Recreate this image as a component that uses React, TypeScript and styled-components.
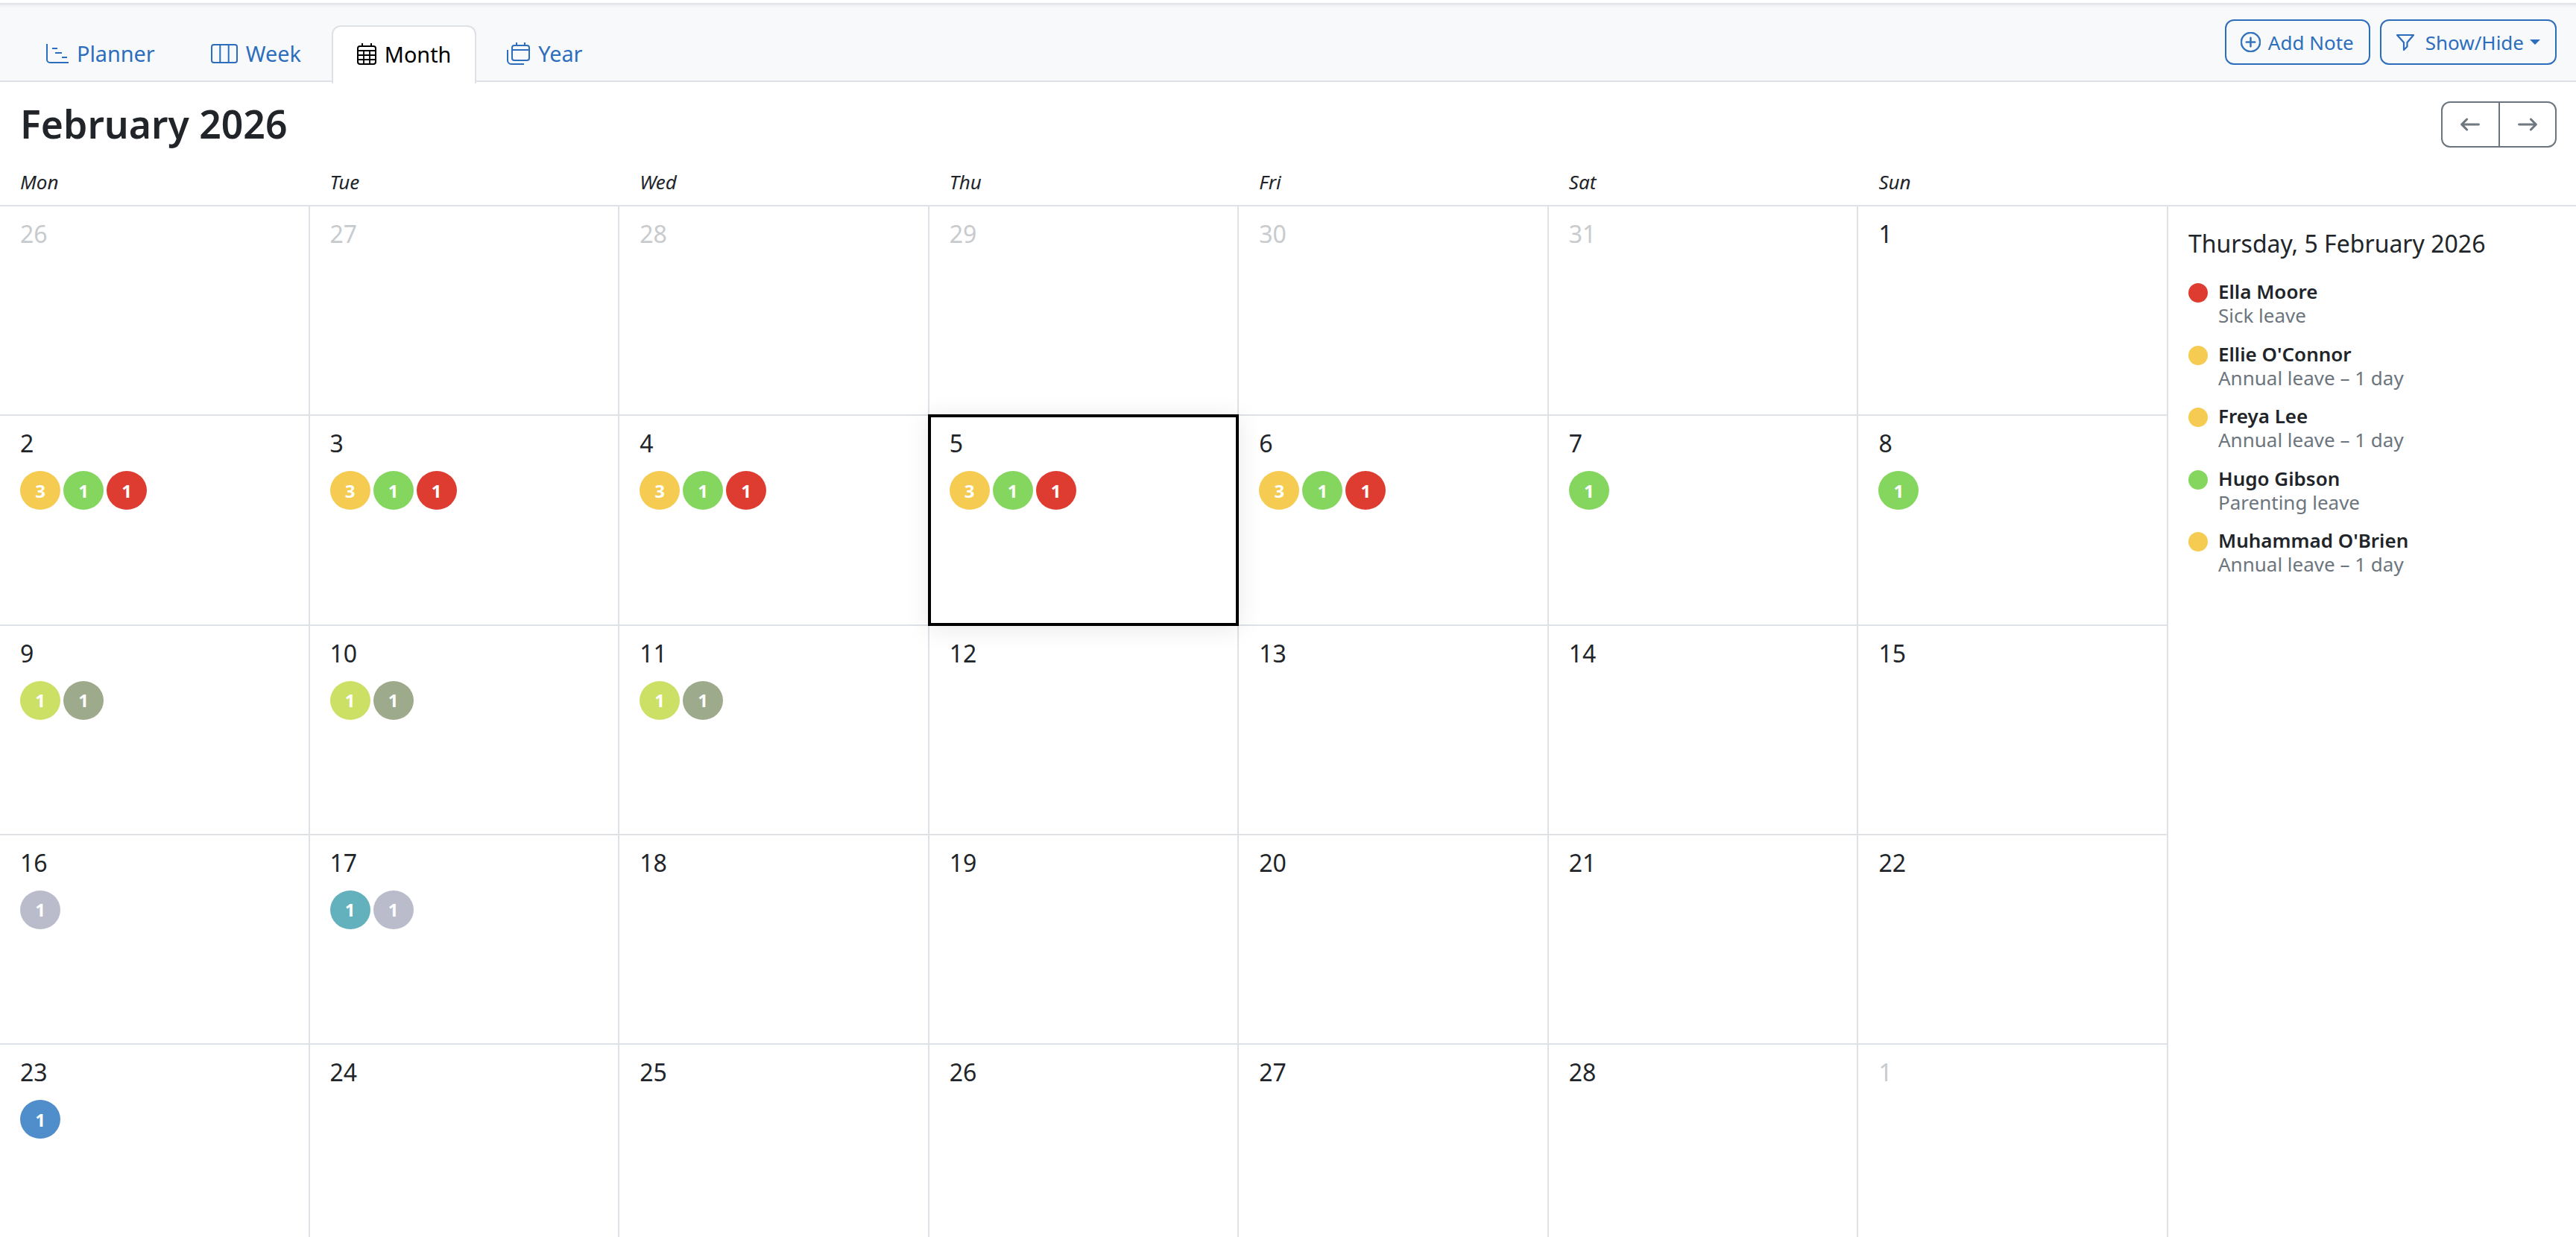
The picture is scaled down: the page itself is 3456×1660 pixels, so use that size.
import React from "react";
import styled, { createGlobalStyle } from "styled-components";
import { BsArrowLeft, BsArrowRight, BsPlusCircle } from "react-icons/bs";

const palette = {
  text: "#212529",
  muted: "#6c757d",
  line: "#dee2e6",
  link: "#2c6ebb",
  toolbar: "#f8f9fb",
  yellow: "#f5cb52",
  green: "#85d65e",
  red: "#df3c31",
  lime: "#cde066",
  sage: "#9eaa8c",
  lavender: "#babccc",
  teal: "#63b1bc",
  blue: "#4f8dcb",
};

const GlobalStyle = createGlobalStyle`
  html, body {
    margin: 0;
    height: 1660px;
    overflow: hidden;
    background: #fff;
  }
  body {
    font-family: "Noto Sans", "Open Sans", sans-serif;
    font-size: 28px;
    color: ${palette.text};
  }
  * { box-sizing: border-box; }
`;

const Page = styled.div`
  display: flex;
  flex-direction: column;
  width: 3456px;
  height: 1660px;
  padding-top: 4px;
  overflow: hidden;
`;

const Toolbar = styled.div`
  display: flex;
  justify-content: space-between;
  height: 106px;
  padding: 0 26px 0 28px;
  background: ${palette.toolbar};
  border-top: 2px solid #e3e4e7;
  border-bottom: 2px solid ${palette.line};
  box-shadow: inset 0 5px 5px -4px rgba(0, 0, 0, 0.08);
`;

const Tabs = styled.div`
  display: flex;
  align-items: flex-end;
  gap: 7px;
  height: 106px;
  margin-top: -2px;
`;

const Tab = styled.div<{ $active?: boolean }>`
  display: flex;
  align-items: center;
  gap: 11px;
  padding: 0 32px 3px;
  margin-bottom: ${(p) => (p.$active ? "-2px" : "0")};
  height: ${(p) => (p.$active ? "78px" : "76px")};
  font-size: 28.8px;
  color: ${(p) => (p.$active ? "#000" : palette.link)};
  background: ${(p) => (p.$active ? "#fff" : "transparent")};
  border: 2px solid ${(p) => (p.$active ? palette.line : "transparent")};
  border-bottom: 0;
  border-radius: 12px 12px 0 0;
`;

const Actions = styled.div`
  display: flex;
  align-items: flex-start;
  gap: 13px;
  padding-top: 20px;
`;

const OutlineButton = styled.div<{ $gap: number }>`
  display: flex;
  align-items: center;
  gap: ${(p) => p.$gap}px;
  height: 61px;
  padding: 0 20px 0 19px;
  font-size: 26px;
  color: ${palette.link};
  border: 2px solid ${palette.link};
  border-radius: 12px;
`;

const Caret = styled.span`
  width: 0;
  height: 0;
  margin-left: -6px;
  border-top: 7px solid currentColor;
  border-left: 7px solid transparent;
  border-right: 7px solid transparent;
`;

const TitleRow = styled.div`
  display: flex;
  justify-content: space-between;
  align-items: flex-start;
  height: 110px;
  padding: 26px 26px 0 27px;
`;

const Title = styled.h1`
  margin: 0;
  font-size: 51.7px;
  font-weight: 600;
  line-height: 60px;
`;

const ArrowGroup = styled.div`
  display: flex;
  width: 155px;
  height: 62px;
  border: 2px solid ${palette.muted};
  border-radius: 12px;
`;

const ArrowButton = styled.div`
  display: flex;
  flex: 1;
  align-items: center;
  justify-content: center;
  color: ${palette.muted};
  font-size: 28px;

  svg {
    stroke: currentColor;
    stroke-width: 0.7;
  }

  & + & {
    border-left: 2px solid ${palette.muted};
  }
`;

const WeekHeader = styled.div`
  display: grid;
  grid-template-columns: repeat(7, 415.57px) 1fr;
  height: 57px;
  border-bottom: 2px solid ${palette.line};
`;

const WeekDay = styled.div`
  padding: 7px 0 0 27px;
  font-size: 26px;
  font-style: italic;
  line-height: 34px;
`;

const Body = styled.div`
  display: flex;
  flex: 1;
  min-height: 0;
`;

const Month = styled.div`
  display: grid;
  grid-template-columns: repeat(7, 415.57px);
  grid-auto-rows: 281.25px;
  width: 2909px;
  flex: none;
`;

const Cell = styled.div<{ $selected?: boolean }>`
  position: relative;
  padding: ${(p) => (p.$selected ? "11px 0 0 25px" : "13px 0 0 27px")};
  margin: ${(p) => (p.$selected ? "-2px 0 0 -2px" : "0")};
  z-index: ${(p) => (p.$selected ? 1 : 0)};
  background: #fff;
  border-right: ${(p) => (p.$selected ? "4px solid #000" : `2px solid ${palette.line}`)};
  border-bottom: ${(p) => (p.$selected ? "4px solid #000" : `2px solid ${palette.line}`)};
  border-left: ${(p) => (p.$selected ? "4px solid #000" : "0")};
  border-top: ${(p) => (p.$selected ? "4px solid #000" : "0")};
  box-shadow: ${(p) => (p.$selected ? "0 4px 32px rgba(0, 0, 0, 0.09)" : "none")};
`;

const DayNumber = styled.div<{ $muted?: boolean }>`
  font-size: 32px;
  line-height: 48px;
  color: ${(p) => (p.$muted ? "#c8cbce" : palette.text)};
`;

const Badges = styled.div`
  display: flex;
  gap: 4px;
  margin-top: 13px;
`;

const Badge = styled.div<{ $color: string }>`
  display: flex;
  align-items: center;
  justify-content: center;
  width: 54px;
  height: 52px;
  border-radius: 50%;
  background: ${(p) => p.$color};
  color: #fff;
  font-size: 24px;
  font-weight: 700;
`;

const Sidebar = styled.aside`
  flex: 1;
  padding: 26px 0 0 27px;
`;

const SidebarTitle = styled.div`
  margin-bottom: 24px;
  font-size: 32px;
  line-height: 48px;
`;

const Person = styled.div`
  display: flex;
  gap: 14px;
  height: 83.5px;
`;

const Dot = styled.div<{ $color: string }>`
  flex: none;
  width: 26px;
  height: 26px;
  margin-top: 5px;
  border-radius: 50%;
  background: ${(p) => p.$color};
`;

const PersonName = styled.div`
  font-size: 26px;
  font-weight: 600;
  line-height: 32px;
`;

const PersonLeave = styled.div`
  font-size: 26px;
  line-height: 32px;
  color: ${palette.muted};
`;

const PlannerIcon = () => (
  <svg width="30" height="26" viewBox="0 0 30 26" fill="none" stroke="currentColor" strokeWidth="2">
    <path d="M1 0v21a4 4 0 0 0 4 4h25" />
    <path d="M8 6h7M12 12h9M21 18h7" />
  </svg>
);

const WeekIcon = () => (
  <svg width="36" height="26" viewBox="0 0 36 26" fill="none" stroke="currentColor" strokeWidth="2">
    <rect x="1" y="1" width="34" height="24" rx="3" />
    <path d="M12.3 1v24M23.7 1v24" />
  </svg>
);

const MonthIcon = () => (
  <svg width="26" height="29" viewBox="0 0 26 29" fill="none" stroke="currentColor" strokeWidth="2">
    <rect x="1" y="4" width="24" height="24" rx="3" />
    <path d="M7 0v4M19 0v4" />
    <path d="M1 10h24M1 16h24M1 22h24M9 10v18M17 10v18" strokeWidth="1.8" />
  </svg>
);

const YearIcon = () => (
  <svg width="31" height="30" viewBox="0 0 31 30" fill="none" stroke="currentColor" strokeWidth="2">
    <rect x="7" y="4" width="23" height="20" rx="3" />
    <path d="M7 10h23M13 0v4M24 0v4" />
    <path d="M1 10v14a5 5 0 0 0 5 5h17" />
  </svg>
);

const FunnelIcon = () => (
  <svg width="26" height="24" viewBox="0 0 26 24" fill="none" stroke="currentColor" strokeWidth="2.2" strokeLinejoin="round">
    <path d="M2 2h22l-8.5 10v5.5L11 22V12z" />
  </svg>
);

type Counts = [string, number][];

const weekdays = ["Mon", "Tue", "Wed", "Thu", "Fri", "Sat", "Sun"];

const busy: Counts = [
  [palette.yellow, 3],
  [palette.green, 1],
  [palette.red, 1],
];
const parenting: Counts = [[palette.green, 1]];
const mixed: Counts = [
  [palette.lime, 1],
  [palette.sage, 1],
];

const days: { n: number; muted?: boolean; badges?: Counts }[] = [
  { n: 26, muted: true },
  { n: 27, muted: true },
  { n: 28, muted: true },
  { n: 29, muted: true },
  { n: 30, muted: true },
  { n: 31, muted: true },
  { n: 1 },
  { n: 2, badges: busy },
  { n: 3, badges: busy },
  { n: 4, badges: busy },
  { n: 5, badges: busy },
  { n: 6, badges: busy },
  { n: 7, badges: parenting },
  { n: 8, badges: parenting },
  { n: 9, badges: mixed },
  { n: 10, badges: mixed },
  { n: 11, badges: mixed },
  { n: 12 },
  { n: 13 },
  { n: 14 },
  { n: 15 },
  { n: 16, badges: [[palette.lavender, 1]] },
  {
    n: 17,
    badges: [
      [palette.teal, 1],
      [palette.lavender, 1],
    ],
  },
  { n: 18 },
  { n: 19 },
  { n: 20 },
  { n: 21 },
  { n: 22 },
  { n: 23, badges: [[palette.blue, 1]] },
  { n: 24 },
  { n: 25 },
  { n: 26 },
  { n: 27 },
  { n: 28 },
  { n: 1, muted: true },
];

const people = [
  { name: "Ella Moore", leave: "Sick leave", color: palette.red },
  { name: "Ellie O'Connor", leave: "Annual leave – 1 day", color: palette.yellow },
  { name: "Freya Lee", leave: "Annual leave – 1 day", color: palette.yellow },
  { name: "Hugo Gibson", leave: "Parenting leave", color: palette.green },
  { name: "Muhammad O'Brien", leave: "Annual leave – 1 day", color: palette.yellow },
];

function App() {
  return (
    <Page>
      <GlobalStyle />
      <Toolbar>
        <Tabs>
          <Tab>
            <PlannerIcon />
            Planner
          </Tab>
          <Tab>
            <WeekIcon />
            Week
          </Tab>
          <Tab $active>
            <MonthIcon />
            Month
          </Tab>
          <Tab>
            <YearIcon />
            Year
          </Tab>
        </Tabs>
        <Actions>
          <OutlineButton $gap={10}>
            <BsPlusCircle size={27} stroke="currentColor" strokeWidth={0.4} />
            Add Note
          </OutlineButton>
          <OutlineButton $gap={14}>
            <FunnelIcon />
            Show/Hide
            <Caret />
          </OutlineButton>
        </Actions>
      </Toolbar>
      <TitleRow>
        <Title>February 2026</Title>
        <ArrowGroup>
          <ArrowButton>
            <BsArrowLeft />
          </ArrowButton>
          <ArrowButton>
            <BsArrowRight />
          </ArrowButton>
        </ArrowGroup>
      </TitleRow>
      <WeekHeader>
        {weekdays.map((d) => (
          <WeekDay key={d}>{d}</WeekDay>
        ))}
      </WeekHeader>
      <Body>
        <Month>
          {days.map((d, i) => (
            <Cell key={i} $selected={i === 10}>
              <DayNumber $muted={d.muted}>{d.n}</DayNumber>
              {d.badges && (
                <Badges>
                  {d.badges.map(([color, count], j) => (
                    <Badge key={j} $color={color}>
                      {count}
                    </Badge>
                  ))}
                </Badges>
              )}
            </Cell>
          ))}
        </Month>
        <Sidebar>
          <SidebarTitle>Thursday, 5 February 2026</SidebarTitle>
          {people.map((p) => (
            <Person key={p.name}>
              <Dot $color={p.color} />
              <div>
                <PersonName>{p.name}</PersonName>
                <PersonLeave>{p.leave}</PersonLeave>
              </div>
            </Person>
          ))}
        </Sidebar>
      </Body>
    </Page>
  );
}

export default App;
